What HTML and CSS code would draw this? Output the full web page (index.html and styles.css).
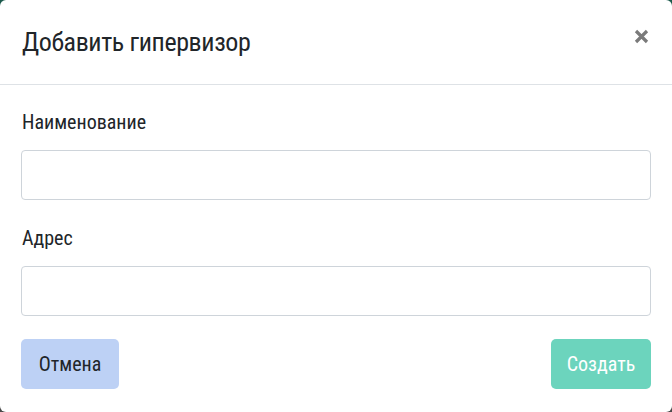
FILE: index.html
```html
<!DOCTYPE html>
<html lang="ru">
<head>
<meta charset="utf-8">
<title>Добавить гипервизор</title>
<link rel="stylesheet" href="styles.css">
</head>
<body>
<div class="modal">
  <div class="modal-header">
    <h5 class="modal-title">Добавить гипервизор</h5>
    <button class="close" type="button" aria-label="Закрыть">
      <svg width="15" height="15" viewBox="0 0 15 15"><path d="M2 2L13 13M13 2L2 13" stroke="#7a7a7a" stroke-width="3.2"/></svg>
    </button>
  </div>
  <div class="modal-body">
    <div class="form-group first">
      <label class="form-label">Наименование</label>
      <input class="form-control" type="text">
    </div>
    <div class="form-group last">
      <label class="form-label">Адрес</label>
      <input class="form-control" type="text">
    </div>
    <div class="modal-footer">
      <button class="btn btn-cancel" type="button">Отмена</button>
      <button class="btn btn-create" type="button">Создать</button>
    </div>
  </div>
</div>
</body>
</html>
```
FILE: styles.css
```css
html, body {
  margin: 0;
  padding: 0;
  height: 100%;
}
body {
  background: linear-gradient(#1c5a4c, #4a4a4a);
  font-family: "Roboto Condensed", "DejaVu Sans Condensed", sans-serif;
  color: #212529;
}
.modal {
  box-sizing: border-box;
  width: 672px;
  height: 412px;
  background: #fff;
  border-radius: 6px;
  display: flex;
  flex-direction: column;
}
.modal-header {
  height: 85px;
  box-sizing: border-box;
  border-bottom: 1px solid #dee2e6;
  display: flex;
  align-items: flex-start;
  justify-content: space-between;
  padding: 0 23px 0 22px;
}
.modal-title {
  margin: 29px 0 0 0;
  font-size: 26px;
  letter-spacing: -0.4px;
  font-weight: 400;
  line-height: 26px;
}
.close {
  border: 0;
  background: none;
  padding: 0;
  margin: 29px 0 0 0;
  width: 15px;
  height: 15px;
  display: flex;
  cursor: pointer;
}
.modal-body {
  padding: 25px 21px 0 21px;
  display: flex;
  flex-direction: column;
}
.form-group {
  display: flex;
  flex-direction: column;
}
.form-group.first {
  margin-bottom: 26px;
}
.form-group.last {
  margin-bottom: 23px;
}
.form-label {
  font-size: 20px;
  line-height: 24px;
  margin-bottom: 16px;
  padding-left: 1px;
}
.form-control {
  box-sizing: border-box;
  height: 50px;
  border: 1px solid #ced4da;
  border-radius: 4px;
  margin: 0;
  padding: 0 12px;
  font: inherit;
}
.modal-footer {
  display: flex;
  justify-content: space-between;
}
.btn {
  height: 50px;
  border: 0;
  border-radius: 5px;
  font-family: inherit;
  font-size: 20px;
  padding: 0;
}
.btn-cancel {
  background: #bdd1f5;
  color: #212529;
  width: 98px;
}
.btn-create {
  background: #6cd4bd;
  color: #fff;
  width: 100px;
}
```
